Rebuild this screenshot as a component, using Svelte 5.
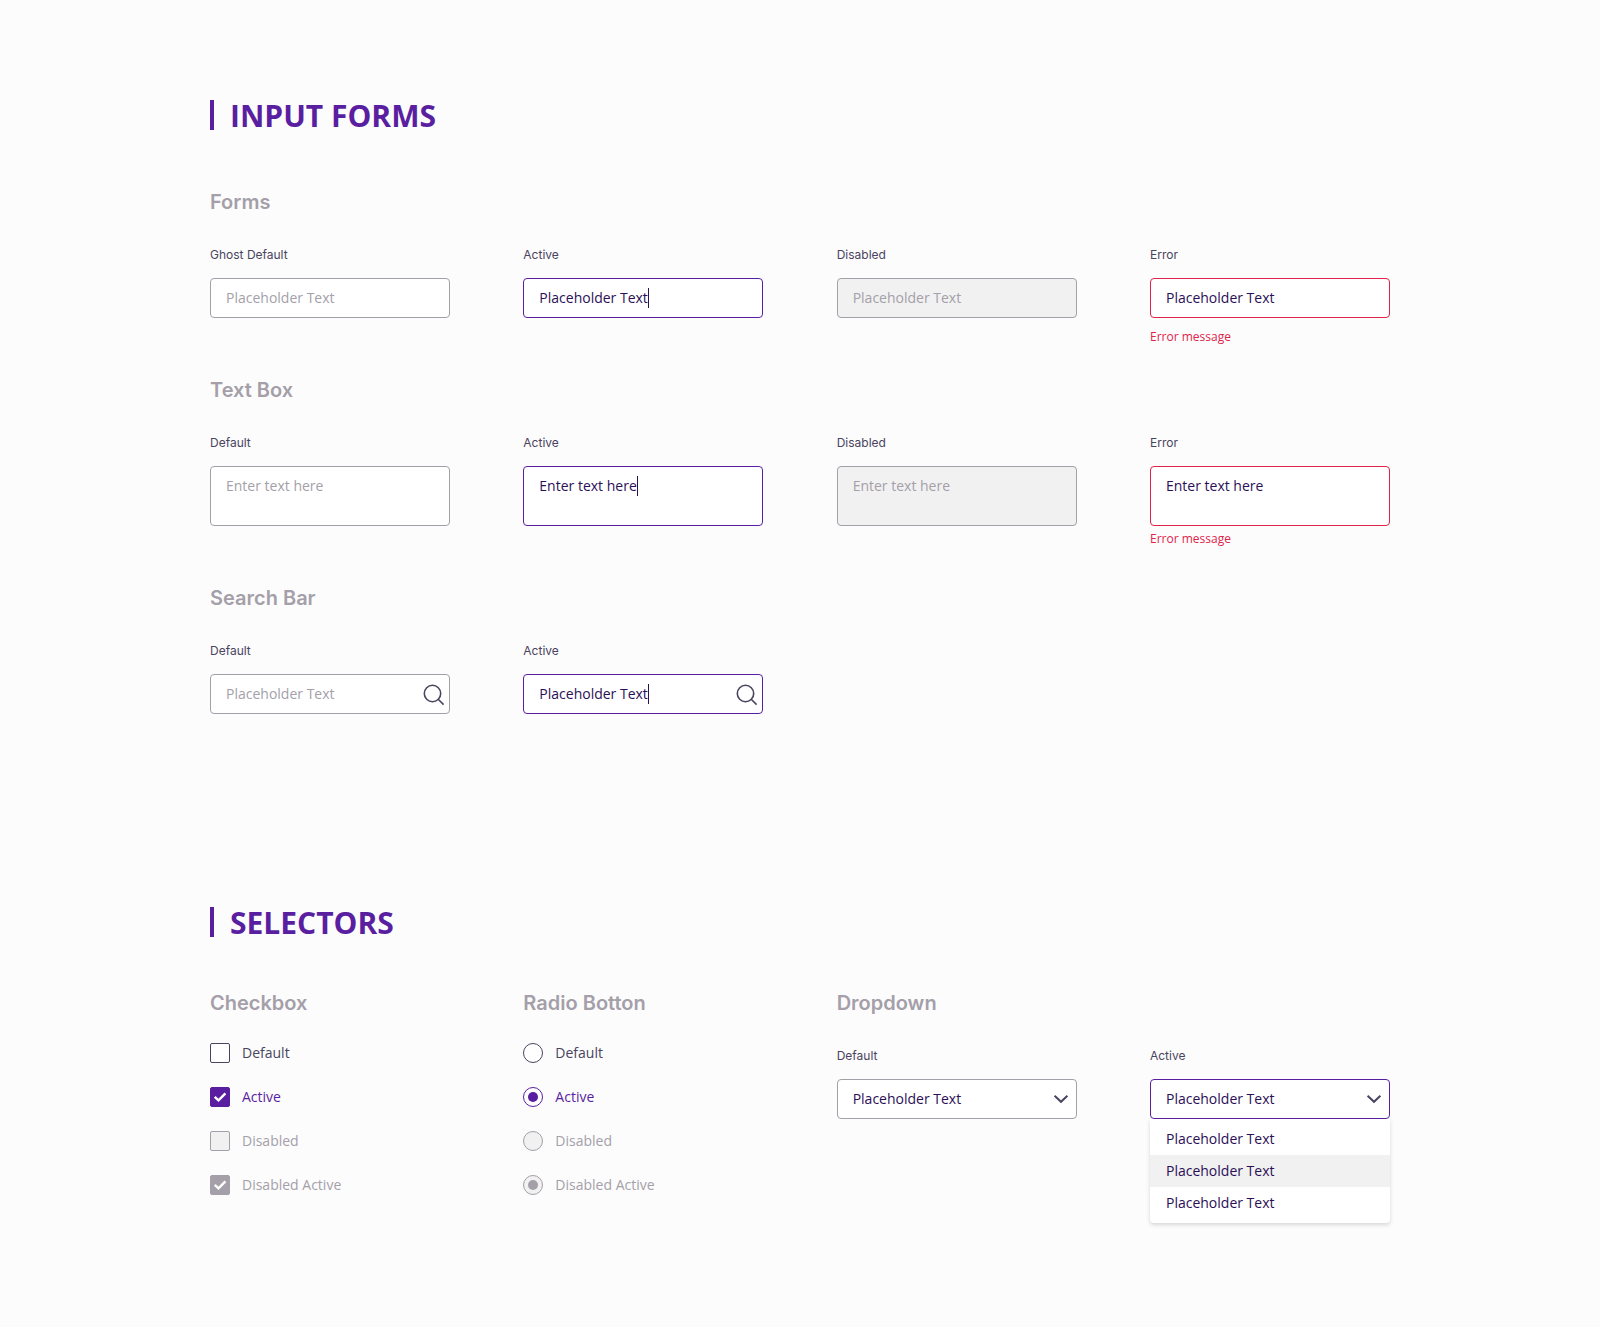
<script>
  const forms = [
    { id: 'form-default', label: 'Ghost Default', placeholder: 'Placeholder Text' },
    { id: 'form-active', label: 'Active', state: 'active', value: 'Placeholder Text', caret: 125 },
    { id: 'form-disabled', label: 'Disabled', placeholder: 'Placeholder Text', disabled: true },
    { id: 'form-error', label: 'Error', state: 'error', value: 'Placeholder Text', error: 'Error message' }
  ]

  const textBoxes = [
    { id: 'text-default', label: 'Default', placeholder: 'Enter text here' },
    { id: 'text-active', label: 'Active', state: 'active', value: 'Enter text here', caret: 114 },
    { id: 'text-disabled', label: 'Disabled', placeholder: 'Enter text here', disabled: true },
    { id: 'text-error', label: 'Error', state: 'error', value: 'Enter text here', error: 'Error message' }
  ]

  const searches = [
    { id: 'search-default', label: 'Default', placeholder: 'Placeholder Text' },
    { id: 'search-active', label: 'Active', state: 'active', value: 'Placeholder Text', caret: 125 }
  ]

  const choices = [
    { label: 'Default' },
    { label: 'Active', checked: true },
    { label: 'Disabled', disabled: true },
    { label: 'Disabled Active', checked: true, disabled: true }
  ]

  const options = ['Placeholder Text', 'Placeholder Text', 'Placeholder Text']
  let highlighted = $state(1)
</script>

{#snippet caretMark(left)}
  {#if left}
    <span class="caret" style="left: {left}px"></span>
  {/if}
{/snippet}

{#snippet chevron()}
  <svg class="chevron" viewBox="0 0 16 10" aria-hidden="true">
    <path d="M1.6 1.8l6.4 6 6.4-6" />
  </svg>
{/snippet}

<main>
  <section class="inputs">
    <h1>INPUT FORMS</h1>

    <section class="group">
      <h2>Forms</h2>
      <div class="grid">
        {#each forms as f}
          <div class="field">
            <label for={f.id}>{f.label}</label>
            <div class="control">
              <input id={f.id} class={f.state} type="text" placeholder={f.placeholder} value={f.value ?? ''} disabled={f.disabled} />
              {@render caretMark(f.caret)}
            </div>
            {#if f.error}<p class="error-message">{f.error}</p>{/if}
          </div>
        {/each}
      </div>
    </section>

    <section class="group text-boxes">
      <h2>Text Box</h2>
      <div class="grid">
        {#each textBoxes as f}
          <div class="field">
            <label for={f.id}>{f.label}</label>
            <div class="control">
              <textarea id={f.id} class={f.state} placeholder={f.placeholder} value={f.value ?? ''} disabled={f.disabled}></textarea>
              {@render caretMark(f.caret)}
            </div>
            {#if f.error}<p class="error-message">{f.error}</p>{/if}
          </div>
        {/each}
      </div>
    </section>

    <section class="group">
      <h2>Search Bar</h2>
      <div class="grid">
        {#each searches as f}
          <div class="field">
            <label for={f.id}>{f.label}</label>
            <div class="control">
              <input id={f.id} class={f.state} type="text" placeholder={f.placeholder} value={f.value ?? ''} />
              {@render caretMark(f.caret)}
              <svg class="search" viewBox="0 0 22 22" aria-hidden="true">
                <circle cx="9.5" cy="9.5" r="8.2" />
                <path d="M15.2 15.2l5.4 5.4" />
              </svg>
            </div>
          </div>
        {/each}
      </div>
    </section>
  </section>

  <section class="selectors">
    <h1>SELECTORS</h1>

    <div class="grid">
      <section>
        <h2>Checkbox</h2>
        <div class="choices">
          {#each choices as c}
            <label class="choice" class:checked={c.checked} class:disabled={c.disabled}>
              <span class="tick">
                <input type="checkbox" checked={c.checked} disabled={c.disabled} />
                {#if c.checked}
                  <svg viewBox="0 0 20 20" aria-hidden="true"><path d="M4.7 9.8l3.8 3.6 6.9-7" /></svg>
                {/if}
              </span>
              {c.label}
            </label>
          {/each}
        </div>
      </section>

      <section>
        <h2>Radio Botton</h2>
        <div class="choices">
          {#each choices as c, i}
            <label class="choice" class:checked={c.checked} class:disabled={c.disabled}>
              <input type="radio" name="radio-{i}" checked={c.checked} disabled={c.disabled} />
              {c.label}
            </label>
          {/each}
        </div>
      </section>

      <section class="dropdowns">
        <h2>Dropdown</h2>
        <div class="pair">
          <div class="field">
            <label for="select-default">Default</label>
            <div class="control">
              <select id="select-default">
                <option>Placeholder Text</option>
              </select>
              {@render chevron()}
            </div>
          </div>

          <div class="field">
            <label for="select-active">Active</label>
            <div class="control">
              <select id="select-active" class="active">
                <option>Placeholder Text</option>
              </select>
              {@render chevron()}
              <div class="menu">
                {#each options as option, i}
                  <button type="button" class:highlighted={i == highlighted} onmouseenter={() => (highlighted = i)}>
                    {option}
                  </button>
                {/each}
              </div>
            </div>
          </div>
        </div>
      </section>
    </div>
  </section>
</main>

<style>
  :global(body) {
    background: #fcfcfc;
  }

  main {
    --purple: #5a1fa0;
    --ink: #2b0f57;
    --slate: #4a4460;
    --grey: #a49fa9;
    --red: #e0234a;
    --fill: #f1f1f1;

    box-sizing: border-box;
    max-width: 1220px;
    margin: 0 auto;
    padding: 100px 20px;
    font: 14px/20px 'Open Sans', sans-serif;
    color: var(--ink);
  }

  h1 {
    margin: 0;
    padding: 2px 0 0 16px;
    border-left: 4px solid var(--purple);
    font-size: 30px;
    line-height: 28px;
    font-weight: 700;
    color: var(--purple);
  }

  h2 {
    margin: 0;
    font: 600 20px/24px Inter, sans-serif;
    color: var(--grey);
  }

  .inputs h1 {
    margin-bottom: 60px;
  }

  .selectors {
    margin-top: 193px;
  }

  .selectors h1 {
    margin-bottom: 54px;
  }

  .group + .group {
    margin-top: 32px;
  }

  .text-boxes + .group {
    margin-top: 38px;
  }

  .group h2,
  .dropdowns h2 {
    margin-bottom: 32px;
  }

  .grid,
  .pair {
    display: grid;
    grid-template-columns: repeat(4, minmax(0, 240px));
    justify-content: space-between;
  }

  .dropdowns {
    grid-column: span 2;
  }

  .pair {
    grid-template-columns: repeat(2, minmax(0, 240px));
  }

  .field label {
    display: block;
    margin-bottom: 14px;
    font: 12px/18px Inter, sans-serif;
    color: var(--slate);
  }

  .control {
    position: relative;
  }

  .control input,
  textarea,
  select {
    display: block;
    box-sizing: border-box;
    width: 100%;
    height: 40px;
    margin: 0;
    padding: 9px 15px;
    border: 1px solid var(--grey);
    border-radius: 4px;
    outline: none;
    background: #fff;
    font: inherit;
    color: var(--ink);
    appearance: none;
    resize: none;
  }

  .control input {
    padding: 8px 15px 10px;
  }

  textarea {
    height: 60px;
    overflow: hidden;
  }

  .control input::placeholder,
  textarea::placeholder {
    color: var(--grey);
    opacity: 1;
  }

  .control input:disabled,
  textarea:disabled {
    background: var(--fill);
  }

  .control .active {
    border-color: var(--purple);
  }

  .control .error {
    border-color: var(--red);
  }

  .error-message {
    margin: 10px 0 0;
    font-size: 12px;
    line-height: 18px;
    color: var(--red);
  }

  .text-boxes .error-message {
    margin-top: 4px;
  }

  .caret {
    position: absolute;
    top: 10px;
    width: 1px;
    height: 20px;
    background: var(--ink);
  }

  .search {
    position: absolute;
    top: 10px;
    right: 5px;
    width: 22px;
    height: 22px;
    fill: none;
    stroke: var(--slate);
    stroke-width: 1.6;
  }

  .chevron {
    position: absolute;
    top: 15px;
    right: 8px;
    width: 16px;
    height: 10px;
    fill: none;
    stroke: var(--slate);
    stroke-width: 2;
  }

  .choices {
    display: grid;
    row-gap: 24px;
    margin-top: 28px;
  }

  .choice {
    display: flex;
    align-items: center;
    gap: 12px;
    color: var(--slate);
  }

  .choice.checked {
    color: var(--purple);
  }

  .choice.disabled {
    color: var(--grey);
  }

  .choice input {
    display: block;
    box-sizing: border-box;
    width: 20px;
    height: 20px;
    margin: 0;
    border: 1px solid currentColor;
    border-radius: 2px;
    background: #fff;
    color: inherit;
    appearance: none;
  }

  .choice.disabled input {
    background: var(--fill);
  }

  .choice input[type='checkbox']:checked {
    background: currentColor;
  }

  .choice input[type='radio'] {
    border-radius: 50%;
  }

  .choice input[type='radio']:checked {
    padding: 4px;
  }

  .choice input[type='radio']:checked::before {
    content: '';
    display: block;
    height: 10px;
    border-radius: 50%;
    background: currentColor;
  }

  .tick {
    position: relative;
  }

  .tick svg {
    position: absolute;
    inset: 0;
    fill: none;
    stroke: #fff;
    stroke-width: 2.4;
  }

  .menu {
    position: absolute;
    top: 100%;
    left: 0;
    right: 0;
    padding: 4px 0;
    border-radius: 0 0 4px 4px;
    background: #fff;
    box-shadow: 0 2px 4px rgba(0, 0, 0, 0.15);
  }

  .menu button {
    display: block;
    width: 100%;
    padding: 6px 16px;
    border: 0;
    background: none;
    font: inherit;
    color: inherit;
    text-align: left;
  }

  .menu .highlighted {
    background: var(--fill);
  }
</style>
